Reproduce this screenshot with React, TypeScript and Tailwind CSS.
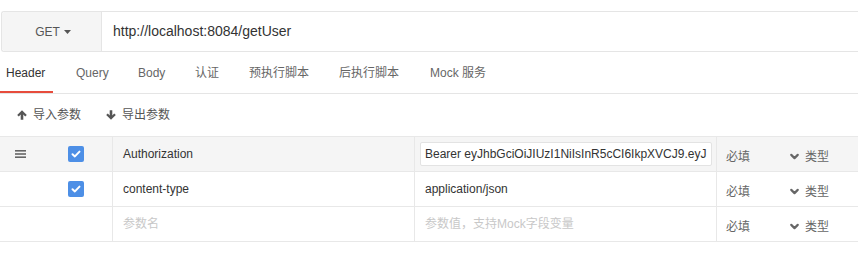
import { ChevronDown } from "lucide-react"

type Row = {
  name: string
  value: string
  checked: boolean
  active?: boolean
  placeholder?: boolean
}

const rows: Row[] = [
  {
    name: "Authorization",
    value: "Bearer eyJhbGciOiJIUzI1NiIsInR5cCI6IkpXVCJ9.eyJ",
    checked: true,
    active: true,
  },
  { name: "content-type", value: "application/json", checked: true },
  { name: "参数名", value: "参数值，支持Mock字段变量", checked: false, placeholder: true },
]

const tabs = [
  { label: "Header", w: "w-[70px]" },
  { label: "Query", w: "w-[62px]" },
  { label: "Body", w: "w-[57px]" },
  { label: "认证", w: "w-[54px]" },
  { label: "预执行脚本", w: "w-[90px]" },
  { label: "后执行脚本", w: "w-[91px]" },
  { label: "Mock 服务", w: "w-[90px]" },
]

function Check() {
  return (
    <span className="flex h-[16px] w-[16px] items-center justify-center rounded-[2px] bg-[#4d8fe6]">
      <svg width="10" height="8" viewBox="0 0 10 8">
        <path d="M1.5 4.2 L3.9 6.4 L8.5 1.6" fill="none" stroke="white" strokeWidth="2" strokeLinecap="round" strokeLinejoin="round" />
      </svg>
    </span>
  )
}

function DragHandle() {
  return (
    <svg width="11" height="8" viewBox="0 0 11 8">
      <rect x="0" y="0" width="11" height="1.6" fill="#666" />
      <rect x="0" y="3.2" width="11" height="1.6" fill="#666" />
      <rect x="0" y="6.4" width="11" height="1.6" fill="#666" />
    </svg>
  )
}

// 实心箭头，down 时翻转
function SolidArrow({ down }: { down?: boolean }) {
  return (
    <svg width="10" height="10" viewBox="0 0 10 10" className={down ? "rotate-180" : ""}>
      <path d="M5 0.3 L9.8 5 L8.2 6.5 L6.3 4.6 L6.3 9.8 L3.7 9.8 L3.7 4.6 L1.8 6.5 L0.2 5 Z" fill="#555" />
    </svg>
  )
}

export default function App() {
  return (
    <div className="h-[263px] w-[858px] overflow-hidden bg-white font-['Liberation_Sans','Noto_Sans_CJK_SC',sans-serif] text-[12px] text-[#333]">
      {/* 请求地址栏 */}
      <div className="pl-[1px] pt-[11px]">
        <div className="flex h-[41px] rounded-l-[3px] border border-r-0 border-[#e5e5e5]">
          <div className="flex w-[100px] items-center justify-center gap-[4px] rounded-l-[3px] border-r border-[#e5e5e5] bg-[#f5f5f5] pl-[3px] text-[#555]">
            <span>GET</span>
            <svg width="7" height="4" viewBox="0 0 7 4">
              <path d="M0 0 L7 0 L3.5 4 Z" fill="#555" />
            </svg>
          </div>
          <div className="flex items-center pl-[11px] text-[14px] text-[#333]">http://localhost:8084/getUser</div>
        </div>
      </div>

      {/* 标签页 */}
      <div className="flex h-[42px] border-b border-[#e5e5e5]">
        {tabs.map((t, i) => (
          <div key={t.label} className={`flex ${t.w}`}>
            <div
              className={
                i === 0
                  ? "flex w-[53px] items-center border-b-2 border-[#e74c3c] pl-[6px] pt-[3px] text-[#333]"
                  : "flex items-center pl-[6px] pt-[1px] text-[#666]"
              }
            >
              {t.label}
            </div>
          </div>
        ))}
      </div>

      {/* 导入导出 */}
      <div className="flex h-[42px] items-center pl-[17px] text-[#555]">
        <div className="flex items-center gap-[6px]">
          <SolidArrow />
          <span>导入参数</span>
        </div>
        <div className="ml-[25px] flex items-center gap-[6px]">
          <SolidArrow down />
          <span>导出参数</span>
        </div>
      </div>

      {/* 参数表格 */}
      <div className="border-t border-[#e8e8e8]">
        {rows.map((r) => (
          <div
            key={r.name}
            className={`flex h-[35px] border-b border-[#e8e8e8] ${r.active ? "bg-[#f5f5f5]" : "bg-white"}`}
          >
            <div className="flex w-[113px] items-center border-r border-[#e8e8e8]">
              <div className="flex w-[68px] items-center pl-[15px]">{r.active && <DragHandle />}</div>
              {r.checked && <Check />}
            </div>
            <div className={`flex w-[302px] items-center border-r border-[#e8e8e8] pl-[10px] ${r.placeholder ? "text-[#c8c8c8]" : "text-[#333]"}`}>
              {r.name}
            </div>
            <div className="flex w-[302px] items-center border-r border-[#e8e8e8] pl-[5px] pr-[4px]">
              {r.active ? (
                <div className="flex h-[24px] w-full items-center overflow-hidden whitespace-nowrap rounded-[2px] border border-[#e3e3e3] bg-white pl-[4px] text-[#333]">
                  {r.value}
                </div>
              ) : (
                <span className={`pl-[5px] ${r.placeholder ? "text-[#c8c8c8]" : "text-[#333]"}`}>{r.value}</span>
              )}
            </div>
            <div className="flex flex-1 items-center pl-[9px] pt-[5px] text-[#666]">
              <span className="w-[62px]">必填</span>
              <ChevronDown size={13} strokeWidth={4} color="#666" />
              <span className="ml-[4px]">类型</span>
            </div>
          </div>
        ))}
      </div>
    </div>
  )
}
